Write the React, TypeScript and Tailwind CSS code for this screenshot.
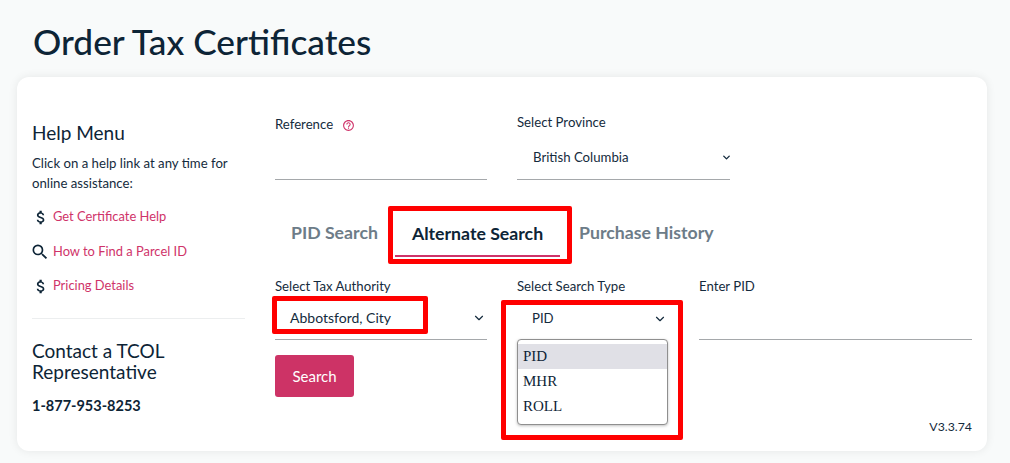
import { ChevronDown } from 'lucide-react';
import { MdAttachMoney, MdHelpOutline, MdSearch } from 'react-icons/md';

const body = "font-['Lato','Noto_Sans',sans-serif]";

function HelpLink({ icon, label }: { icon: React.ReactNode; label: string }) {
  return (
    <div className="flex items-center h-[20px]">
      <span className="w-[18px] mr-[3px] flex justify-center text-[#0d2436]">{icon}</span>
      <a className="text-[12.9px] text-[#cf3369]">{label}</a>
    </div>
  );
}

function Chevron({ className }: { className: string }) {
  return <ChevronDown size={14} strokeWidth={2} className={className} />;
}

export default function App() {
  return (
    <div className={`h-[463px] bg-[#f8fafa] overflow-hidden text-[#142b3d] ${body}`}>
      <h1 className="pl-[33px] pt-[20px] text-[35.3px] leading-[44px] font-medium text-[#0d2436] font-['Lato',sans-serif]">
        Order Tax Certificates
      </h1>

      <div className="mt-[13px] ml-[17px] w-[970px] h-[374px] bg-white rounded-[12px] shadow-[0_0_10px_rgba(0,0,0,0.08)] flex relative">
        {/* help menu */}
        <aside className="w-[213px] ml-[15px] pt-[44px] shrink-0">
          <h2 className="text-[19px] leading-[24px] text-[#0d2436]">Help Menu</h2>
          <p className="mt-[8px] text-[13.2px] leading-[20px] w-[205px]">
            Click on a help link at any time for online assistance:
          </p>
          <div className="mt-[14px] flex flex-col gap-[14.5px]">
            <HelpLink icon={<MdAttachMoney size={21} />} label="Get Certificate Help" />
            <HelpLink icon={<MdSearch size={20} className="-ml-[2px]" />} label="How to Find a Parcel ID" />
            <HelpLink icon={<MdAttachMoney size={21} />} label="Pricing Details" />
          </div>
          <div className="mt-[22px] border-t border-[#eceeef]" />
          <h2 className="mt-[21px] text-[19px] leading-[21px] text-[#0d2436]">
            Contact a TCOL
            <br />
            Representative
          </h2>
          <p className="mt-[14px] text-[14.5px] font-bold leading-[20px] text-[#0d2436]">1-877-953-8253</p>
        </aside>

        {/* order form */}
        <main className="ml-[30px] flex-1 relative">
          <div className="flex pt-[37px]">
            <div className="w-[212px] h-[66px] border-b border-[#a5a8ab]">
              <div className="flex items-center text-[13.2px] leading-[20px]">
                Reference
                <MdHelpOutline size={13} className="ml-[9px] mt-[3px] text-[#cf3369]" />
              </div>
            </div>
            <div className="ml-[30px] w-[213px] h-[68px] border-b border-[#a5a8ab] -mt-[2px]">
              <div className="text-[13.2px] leading-[20px]">Select Province</div>
              <div className="mt-[15px] pl-[16px] flex items-center justify-between text-[13.2px] leading-[20px]">
                British Columbia
                <ChevronDown size={11} strokeWidth={3} className="text-[#142b3d] mr-[-2px]" />
              </div>
            </div>
          </div>

          {/* tabs */}
          <div className="relative mt-[26px] ml-[16px] flex items-start h-[58px] text-[17.7px] font-bold leading-[24px] text-[#6d7c88]">
            <span className="mt-[15px] w-[97px]">PID Search</span>
            <div className="mt-[16px] ml-[7px] w-[165px] h-[35px] text-[#0d2436] text-center border-b-2 border-[#cf3369]">
              Alternate Search
            </div>
            <span className="ml-[19px] mt-[15px]">Purchase History</span>
            <div className="absolute left-[97px] top-0 w-[184px] h-[58px] border-[5px] border-[#ff0000] rounded-[2px]" />
          </div>

          <div className="flex mt-[12px]">
            <div className="w-[212px]">
              <div className="text-[13.2px] leading-[20px]">Select Tax Authority</div>
              <div className="relative mt-[7px] h-[37px] border-b border-[#a5a8ab] pl-[15px] pr-[1px] flex items-center justify-between text-[14px] pb-[7px]">
                Abbotsford, City
                <Chevron className="text-[#142b3d]" />
                <div className="absolute -left-[3px] -top-[7px] w-[156px] h-[38px] border-[5px] border-[#ff0000] rounded-[2px]" />
              </div>
              <button className="mt-[15px] w-[79px] h-[42px] rounded-[3px] bg-[#cd3366] text-white text-[15px]">Search</button>
            </div>

            <div className="ml-[30px] w-[152px] relative">
              <div className="text-[13.2px] leading-[20px]">Select Search Type</div>
              <div className="mt-[7px] h-[32px] pl-[15px] pr-[2px] flex items-center justify-between text-[13.2px]">
                PID
                <Chevron className="text-[#142b3d]" />
              </div>
              <div className="absolute left-0 top-[63px] w-[151px] h-[86px] bg-white border border-[#8f8f8f] rounded-[4px] shadow-[0_1px_3px_rgba(0,0,0,0.25)] pt-[4px] text-[15px] text-[#0d2436] font-['Liberation_Serif',serif] leading-[25px]">
                <div className="bg-[#e0e0e6] pl-[5px]">PID</div>
                <div className="pl-[5px]">MHR</div>
                <div className="pl-[5px]">ROLL</div>
              </div>
              <div className="absolute -left-[16px] top-[24px] w-[182px] h-[140px] border-[5px] border-[#ff0000] rounded-[2px]" />
            </div>

            <div className="ml-[30px] w-[273px]">
              <div className="text-[13.2px] leading-[20px]">Enter PID</div>
              <div className="mt-[7px] h-[37px] border-b border-[#a5a8ab]" />
            </div>
          </div>

          <div className="absolute right-[15px] top-[342px] text-[12.3px] leading-[16px]">V3.3.74</div>
        </main>
      </div>
    </div>
  );
}
